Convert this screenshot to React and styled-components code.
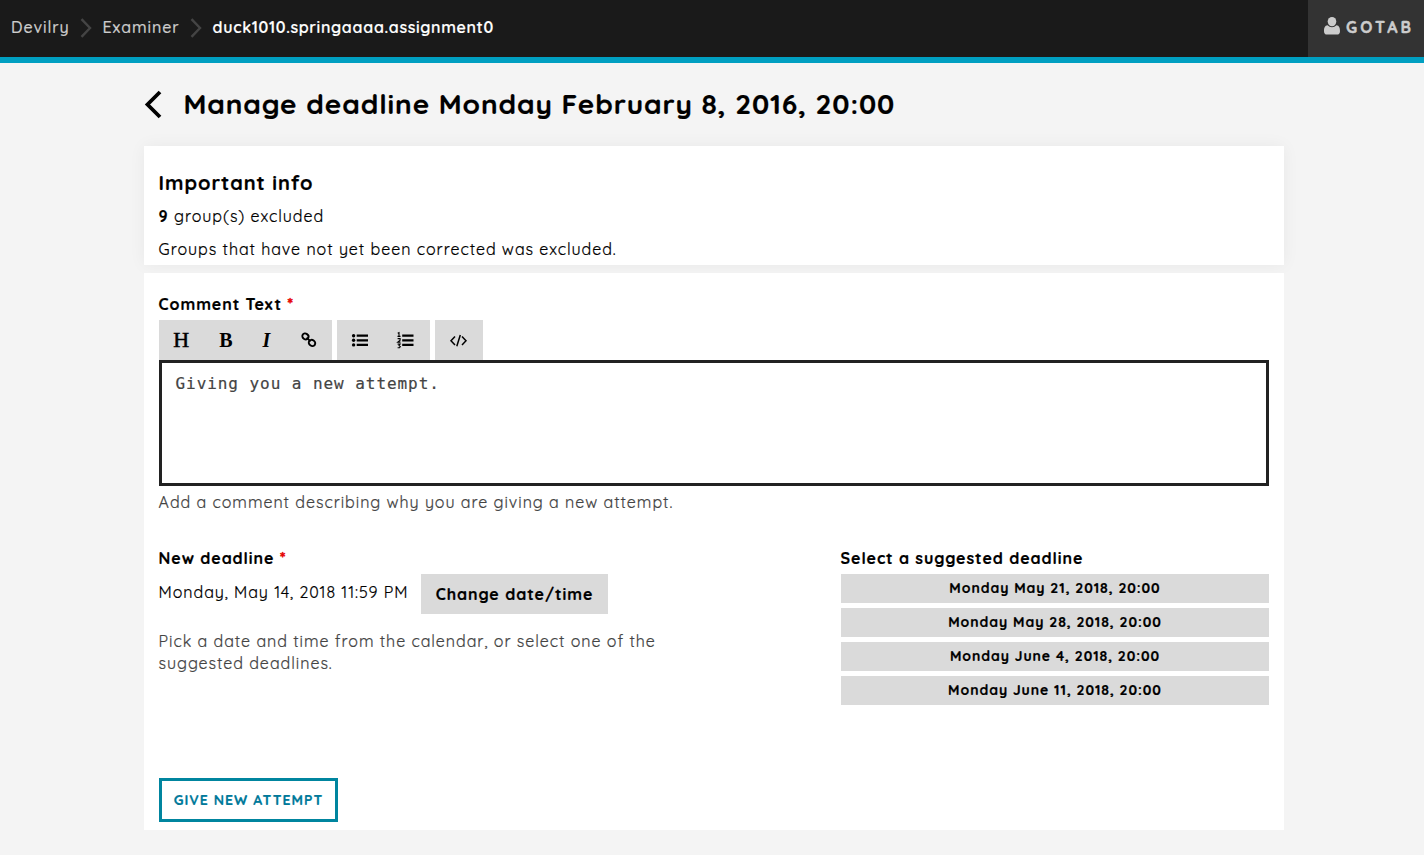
import React from "react";
import styled, { createGlobalStyle } from "styled-components";

const GlobalStyle = createGlobalStyle`
  *, *::before, *::after { box-sizing: border-box; }
  body {
    margin: 0;
    background: #f4f4f4;
    color: #000;
    font: 400 16px/22px Quicksand, Lato, sans-serif;
    letter-spacing: 0.95px;
    -webkit-text-stroke: 0.2px;
  }
  h1, h2, p { margin: 0; }
  button { font: inherit; letter-spacing: inherit; color: inherit; border: 0; margin: 0; padding: 0; cursor: pointer; }
`;

const Header = styled.header`
  display: flex;
  justify-content: space-between;
  height: 63px;
  background: #1a1a1a;
  border-bottom: 6px solid #009fc1;
`;

const Breadcrumbs = styled.nav`
  display: flex;
  align-items: center;
  height: 54px;
  padding-left: 11px;
`;

const Crumb = styled.a`
  color: ${(p) => (p.$current ? "#fff" : "#ccc")};
  font-weight: ${(p) => (p.$current ? 600 : 500)};
  letter-spacing: ${(p) => p.$ls}px;
  width: ${(p) => p.$width}px;
  white-space: nowrap;
`;

const CrumbArrow = styled.svg`
  flex: none;
  width: 12px;
  height: 20px;
  margin: 2px 10.5px 0 11px;
  fill: none;
  stroke: #444;
  stroke-width: 2.4;
`;

const UserButton = styled.button`
  display: flex;
  width: 116px;
  height: 57px;
  padding: 16px 0 0 15px;
  background: #333;
  color: #ccc;
  font-weight: 700;
  letter-spacing: 3px;
  -webkit-text-stroke: 0.4px #ccc;

  svg { width: 18px; height: 20px; margin-right: 5px; fill: #ccc; }
`;

const Container = styled.main`
  width: 1140px;
  margin-left: 144px;
`;

const TitleRow = styled.div`
  display: flex;
  align-items: center;
  height: 83px;
  padding-bottom: 1px;
`;

const BackArrow = styled.svg`
  width: 20px;
  height: 30px;
  margin-right: 19.5px;
  fill: none;
  stroke: #000;
  stroke-width: 3.8;
`;

const Title = styled.h1`
  font-size: 28px;
  line-height: 30px;
  letter-spacing: 0.89px;
  white-space: nowrap;
`;

const InfoBox = styled.section`
  height: 119px;
  padding: 26px 15px 0 14.6px;
  background: #fff;
  box-shadow: 0 0 16px rgba(0, 0, 0, 0.05);

  h2 { font-size: 20px; line-height: 22px; letter-spacing: 0.96px; margin-bottom: 11px; }
  p + p { margin-top: 11px; }
`;

const FormBox = styled.form`
  height: 557px;
  margin-top: 8px;
  padding: 20px 15px 0;
  background: #fff;
`;

const Label = styled.div`
  font-weight: 700;
  letter-spacing: 0.92px;
  margin: 0 0 5px -0.4px;
`;

const Required = styled.span`
  color: #e60000;
  -webkit-text-stroke: 0.5px #e60000;
`;

const Toolbar = styled.div`
  display: flex;
  gap: 5px;
  height: 40px;
`;

const ToolGroup = styled.div`
  display: flex;
  background: #dadada;
`;

const Tool = styled.button`
  display: flex;
  align-items: center;
  justify-content: center;
  width: ${(p) => p.$width}px;
  background: none;

  svg { display: block; width: 20px; height: 20px; }
`;

const Letter = styled.span`
  font: ${(p) => p.$font || "400"} 20px/40px "Liberation Serif", serif;
  letter-spacing: 0;
  transform: scaleX(${(p) => p.$stretch || 1});
  -webkit-text-stroke: ${(p) => p.$stroke || 0}px #000;
`;

const CommentInput = styled.textarea`
  display: block;
  width: 100%;
  height: 126px;
  padding: 10px 13px 10px 13.5px;
  border: 3px solid #222;
  background: #fff;
  color: #444;
  font: 16px/22px "DejaVu Sans Mono", monospace;
  letter-spacing: 0.94px;
  outline: 0;
  resize: none;
`;

const HelpText = styled.p`
  color: #444;
  margin: ${(p) => p.$gap}px 0 0 -0.4px;
`;

const DeadlineGrid = styled.div`
  display: grid;
  grid-template-columns: 520px 428px;
  justify-content: space-between;
  margin-top: 34px;
  height: 231px;
`;

const DateRow = styled.div`
  display: flex;
  align-items: flex-start;
`;

const DateValue = styled.span`
  width: 262px;
  padding-top: 7px;
  letter-spacing: 0.92px;
  text-indent: -0.4px;
  white-space: nowrap;
`;

const ChangeButton = styled.button`
  width: 187px;
  height: 40px;
  background: #dadada;
  font-weight: 700;
`;

const Suggestions = styled.div`
  display: grid;
  gap: 5px;
`;

const Suggestion = styled.button`
  height: 29px;
  background: #dadada;
  font-size: 14px;
  font-weight: 700;
  line-height: 29px;
  letter-spacing: 0.94px;
`;

const SubmitButton = styled.button`
  width: 179px;
  height: 44px;
  border: 3px solid #00859f;
  background: #fff;
  color: #00799a;
  font-size: 14px;
  font-weight: 700;
  letter-spacing: 1.02px;
`;

const Chevron = () => (
  <CrumbArrow viewBox="0 0 12 20">
    <path d="M1.5 1.2 L10 10 L1.5 18.8" />
  </CrumbArrow>
);

const suggestions = [
  "Monday May 21, 2018, 20:00",
  "Monday May 28, 2018, 20:00",
  "Monday June 4, 2018, 20:00",
  "Monday June 11, 2018, 20:00",
];

export default function App() {
  return (
    <>
      <GlobalStyle />
      <Header>
        <Breadcrumbs>
          <Crumb $ls={0.9} $width={58}>Devilry</Crumb>
          <Chevron />
          <Crumb $ls={0.9} $width={76.5}>Examiner</Crumb>
          <Chevron />
          <Crumb $current $ls={0.65}>duck1010.springaaaa.assignment0</Crumb>
        </Breadcrumbs>
        <UserButton>
          <svg viewBox="0 0 18 20">
            <ellipse cx="9" cy="5.6" rx="4.3" ry="4.7" />
            <path d="M4.6 9.2 C5.8 10.5 7.3 11.2 9 11.2 C10.7 11.2 12.2 10.5 13.4 9.2 C16.3 9.4 17 12.2 17 15.2 C17 17.4 15.8 18.6 14 18.6 H4 C2.2 18.6 1 17.4 1 15.2 C1 12.2 1.7 9.4 4.6 9.2Z" />
          </svg>
          GOTAB
        </UserButton>
      </Header>
      <Container>
        <TitleRow>
          <BackArrow viewBox="0 0 20 30">
            <path d="M16 3 L3.5 15.5 L16 28" />
          </BackArrow>
          <Title>Manage deadline Monday February 8, 2016, 20:00</Title>
        </TitleRow>
        <InfoBox>
          <h2>Important info</h2>
          <p><b>9</b> group(s) excluded</p>
          <p>Groups that have not yet been corrected was excluded.</p>
        </InfoBox>
        <FormBox>
          <Label>Comment Text <Required>*</Required></Label>
          <Toolbar>
            <ToolGroup>
              <Tool type="button" $width={45}><Letter $stroke={0.5} $stretch={1.1}>H</Letter></Tool>
              <Tool type="button" $width={44}><Letter $font="700">B</Letter></Tool>
              <Tool type="button" $width={37}><Letter $font="italic 700">I</Letter></Tool>
              <Tool type="button" $width={47}>
                <svg viewBox="0 0 20 20" fill="none" stroke="#000" strokeWidth="1.9">
                  <ellipse cx="6.4" cy="6.4" rx="3.2" ry="2.8" transform="rotate(35 6.4 6.4)" />
                  <ellipse cx="13" cy="12.9" rx="3.4" ry="2.9" transform="rotate(35 13 12.9)" />
                  <path d="M7.6 7.6 L11.6 11.4" />
                </svg>
              </Tool>
            </ToolGroup>
            <ToolGroup>
              <Tool type="button" $width={46}>
                <svg viewBox="0 0 20 20">
                  <path d="M6.7 5.7H18M6.7 10.3H18M6.7 14.9H18" stroke="#000" strokeWidth="2.2" />
                  <circle cx="3.6" cy="5.7" r="1.7" />
                  <circle cx="3.6" cy="10.3" r="1.7" />
                  <circle cx="3.6" cy="14.9" r="1.7" />
                </svg>
              </Tool>
              <Tool type="button" $width={46}>
                <svg viewBox="0 0 20 20" fill="none" stroke="#000">
                  <path d="M6.2 5.7H17.5M6.2 10.3H17.5M6.2 14.9H17.5" strokeWidth="2.2" />
                  <path d="M1.7 3.2L3 2.6V6.3M1.5 6.4H4.5M1.6 8.6H4.1V10.3L1.8 12.1H4.5M1.6 14.1H4.1L3 15.6L4.3 16.6L3.5 17.7H1.6" strokeWidth="1.1" />
                </svg>
              </Tool>
              <ToolEnd />
            </ToolGroup>
            <ToolGroup>
              <Tool type="button" $width={48}>
                <svg viewBox="0 0 20 20" fill="none" stroke="#000" strokeWidth="1.5">
                  <path d="M6 6.4 L2 10.7 L6 15 M13 6.4 L17 10.7 L13 15 M11.3 5 L7.8 16.3" />
                </svg>
              </Tool>
            </ToolGroup>
          </Toolbar>
          <CommentInput defaultValue="Giving you a new attempt." spellCheck={false} />
          <HelpText $gap={5}>Add a comment describing why you are giving a new attempt.</HelpText>
          <DeadlineGrid>
            <div>
              <Label>New deadline <Required>*</Required></Label>
              <DateRow>
                <DateValue>Monday, May 14, 2018 11:59 PM</DateValue>
                <ChangeButton type="button">Change date/time</ChangeButton>
              </DateRow>
              <HelpText $gap={16}>
                Pick a date and time from the calendar, or select one of the suggested deadlines.
              </HelpText>
            </div>
            <div>
              <Label>Select a suggested deadline</Label>
              <Suggestions>
                {suggestions.map((label) => (
                  <Suggestion type="button" key={label}>{label}</Suggestion>
                ))}
              </Suggestions>
            </div>
          </DeadlineGrid>
          <SubmitButton type="button">GIVE NEW ATTEMPT</SubmitButton>
        </FormBox>
      </Container>
    </>
  );
}

const ToolEnd = styled.span`
  width: 1px;
`;
